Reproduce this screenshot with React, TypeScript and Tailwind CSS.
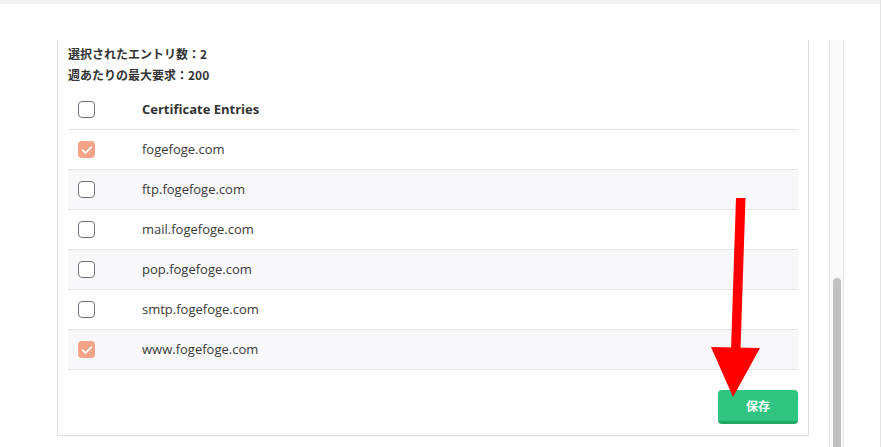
import React from "react";

const entries = [
  { name: "fogefoge.com", checked: true },
  { name: "ftp.fogefoge.com", checked: false },
  { name: "mail.fogefoge.com", checked: false },
  { name: "pop.fogefoge.com", checked: false },
  { name: "smtp.fogefoge.com", checked: false },
  { name: "www.fogefoge.com", checked: true },
];

function Checkbox({ checked }: { checked: boolean }) {
  if (checked) {
    return (
      <span className="flex h-[17px] w-[17px] items-center justify-center rounded-[4px] bg-[#f5a488]">
        <svg viewBox="0 0 16 16" className="h-[14px] w-[14px]" fill="none">
          <path d="M3 8.2l3.3 3.2L13 4.8" stroke="#fff" strokeWidth="2" strokeLinecap="round" strokeLinejoin="round" />
        </svg>
      </span>
    );
  }
  return <span className="block h-[17px] w-[17px] rounded-[4px] border-[1.5px] border-[#70707e] bg-white" />;
}

export default function App() {
  return (
    <div className="relative flex h-[447px] w-[881px] flex-col overflow-hidden border-r border-[#e4e4e4] bg-white font-['Open_Sans','Noto_Sans_CJK_JP',sans-serif] text-[#333]">
      <div className="h-[4px] w-full bg-[#f4f4f4]" />

      <div className="mt-[36px] flex flex-1 pl-[57px]">
        {/* panel, scrolled so its top edge is out of view */}
        <div className="flex h-[396px] w-[752px] flex-col border-x border-b border-[#dedede] px-[10px] pt-[3px]">
          <div className="font-['Noto_Sans_CJK_JP',sans-serif] text-[12px] font-bold leading-[21px] text-[#333]">
            <p>選択されたエントリ数：2</p>
            <p>週あたりの最大要求：200</p>
          </div>

          <div className="mt-[5px] w-[730px]">
            <div className="flex h-[40px] items-center border-b border-[#e2e2e2]">
              <div className="w-[74px] pl-[10px]">
                <Checkbox checked={false} />
              </div>
              <span className="text-[13px] font-bold text-[#333]">Certificate Entries</span>
            </div>
            {entries.map((e, i) => (
              <div
                key={e.name}
                className={
                  "flex h-[40px] items-center border-b border-[#e2e2e2] " +
                  (i % 2 === 1 ? "bg-[#f8f8fa]" : "bg-white")
                }
              >
                <div className="w-[74px] pl-[10px]">
                  <Checkbox checked={e.checked} />
                </div>
                <span className="text-[13px] text-[#3a3a3a]">{e.name}</span>
              </div>
            ))}
          </div>

          <div className="mt-[20px] flex w-[730px] justify-end">
            <button className="h-[34px] w-[80px] rounded-[4px] border-b-[3px] border-[#23a866] bg-[#2fc47f] font-['Noto_Sans_CJK_JP',sans-serif] text-[12px] font-bold text-white">
              保存
            </button>
          </div>
        </div>

        {/* scrollbar */}
        <div className="ml-[20px] flex w-[15px] flex-col border-x border-[#e6e6e6] bg-[#fafafa]">
          <div className="mx-auto mt-[238px] w-[8px] flex-1 rounded-t-full bg-[#c1c1c1]" />
        </div>
      </div>

      {/* red annotation arrow */}
      <svg className="pointer-events-none absolute left-0 top-0" width="881" height="447" viewBox="0 0 881 447">
        <polygon points="736,198 745.5,198 740.5,350 731,350" fill="#ff0000" />
        <polygon points="711,347 760,348 733,397" fill="#ff0000" />
      </svg>
    </div>
  );
}
